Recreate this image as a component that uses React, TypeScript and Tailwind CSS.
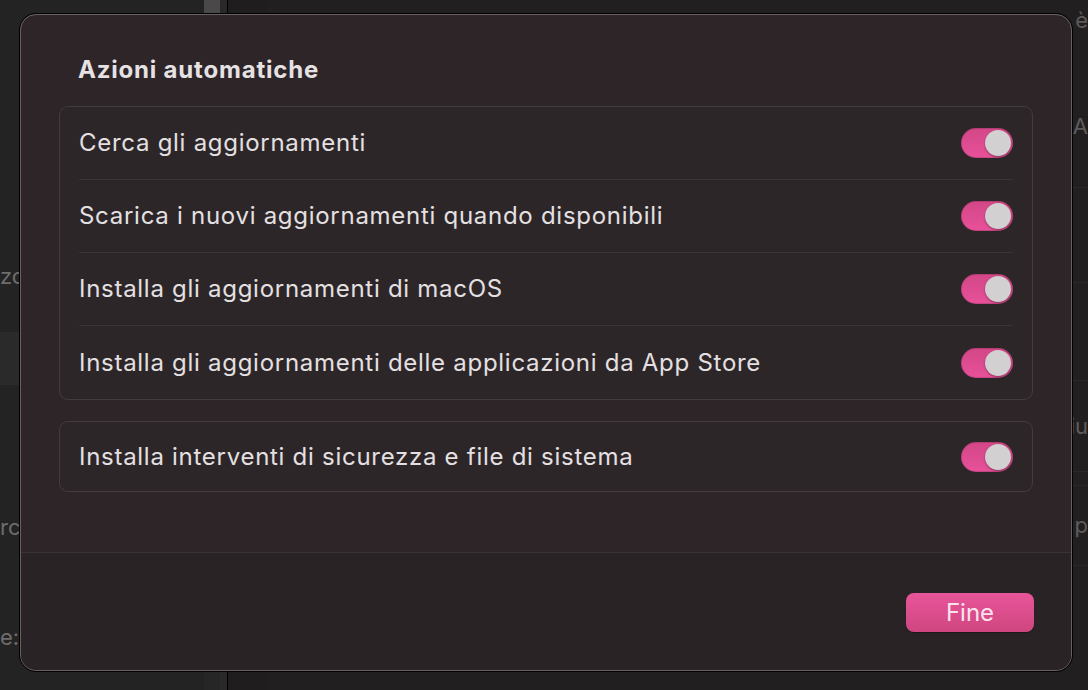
import React from 'react';

interface RowProps {
  label: string;
  last?: boolean;
}

function Toggle() {
  return (
    <div className="relative h-[30px] w-[52px] shrink-0 rounded-full bg-gradient-to-b from-[#d24787] to-[#e8519a] shadow-[inset_0_0_0_1px_rgba(0,0,0,0.15)]">
      <div className="absolute right-[2px] top-[2px] h-[26px] w-[26px] rounded-full bg-[#d3d0d1] shadow-[0_1px_2px_rgba(0,0,0,0.4)]" />
    </div>
  );
}

function Row({ label, last }: RowProps) {
  return (
    <div className={`mx-[19px] flex h-[73px] items-center justify-between ${last ? '' : 'border-b border-[#3b3437]'}`}>
      <span className="text-[24px] tracking-[0.72px] text-[#e4e0e2]">{label}</span>
      <Toggle />
    </div>
  );
}

const groupOne = [
  'Cerca gli aggiornamenti',
  'Scarica i nuovi aggiornamenti quando disponibili',
  'Installa gli aggiornamenti di macOS',
  'Installa gli aggiornamenti delle applicazioni da App Store',
];

export default function App() {
  return (
    <div
      className="relative flex h-[690px] w-[1088px] overflow-hidden bg-[#1d1c1c]"
      style={{ fontFamily: 'Inter, "Noto Sans", sans-serif' }}
    >
      {/* Dimmed window behind the sheet */}
      <div className="flex w-[204px] flex-col bg-[#232323] text-[22px] text-[#6e6d6d]">
        <div className="h-[258px]" />
        <div className="h-[36px] leading-[36px]">zoom</div>
        <div className="mt-[38px] h-[53px] bg-[#2a2a2a]" />
        <div className="h-[124px]" />
        <div className="h-[36px] leading-[36px]">rc</div>
        <div className="h-[74px]" />
        <div className="h-[36px] leading-[36px]">e:</div>
      </div>
      <div className="w-[16px] bg-[#262626]">
        <div className="h-[15px] bg-[#4a4848]" />
      </div>
      <div className="w-[7px] bg-[#2a2929]" />
      <div className="w-[1px] bg-black" />
      <div className="w-[40px] bg-[#1f1d1d]" />
      <div className="flex flex-1 flex-col bg-[#211f20] text-[22px] text-[#5e5b5c]">
        <div className="flex h-[40px] items-center justify-end">è</div>
        <div className="flex h-[148px] items-start justify-end border-b border-[#2a2728] pt-[70px]">i A</div>
        <div className="h-[95px] border-b border-[#2a2728]" />
        <div className="h-[98px] border-b border-[#2a2728]" />
        <div className="flex h-[90px] items-center justify-end">iu</div>
        <div className="h-[14px] border-t border-[#2a2728]" />
        <div className="flex h-[80px] items-center justify-end border-t border-[#2a2728]">np</div>
        <div className="border-t border-[#2a2728]" />
      </div>

      {/* Sheet */}
      <div className="absolute left-[19px] top-[13px] h-[659px] w-[1054px] rounded-[17px] border border-black">
        <div className="flex h-full flex-col overflow-hidden rounded-[16px] border border-[#686064] bg-[#2d2528]">
          <div className="flex flex-col px-[38px] pt-[42px]">
            <h2 className="mb-[24px] pl-[19px] text-[24px] font-bold leading-[25px] tracking-[0.8px] text-[#e6e1e3]">
              Azioni automatiche
            </h2>
            <div className="rounded-[9px] border border-[#433b3f] bg-[#2d2629]">
              {groupOne.map((label, i) => (
                <Row key={label} label={label} last={i === groupOne.length - 1} />
              ))}
            </div>
            <div className="mt-[21px] rounded-[9px] border border-[#433b3f] bg-[#2d2629]">
              <div className="mx-[19px] flex h-[69px] items-center justify-between">
                <span className="text-[24px] tracking-[0.72px] text-[#e4e0e2]">
                  Installa interventi di sicurezza e file di sistema
                </span>
                <Toggle />
              </div>
            </div>
          </div>
          <div className="mt-[60px] flex flex-1 items-start justify-end border-t border-[#3a3336] bg-[#292326] px-[37px] pt-[40px]">
            <button className="h-[39px] w-[128px] rounded-[8px] bg-gradient-to-b from-[#e8559a] to-[#cf467f] text-[24px] text-[#fbe3ee] shadow-[0_1px_1px_rgba(0,0,0,0.3)]">
              Fine
            </button>
          </div>
        </div>
      </div>
    </div>
  );
}
